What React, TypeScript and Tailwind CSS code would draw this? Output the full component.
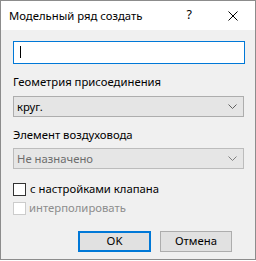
import type { ReactNode } from 'react'

const font = { fontFamily: '"Noto Sans", "Open Sans", sans-serif' }

const Chevron = ({ color = '#606060' }: { color?: string }) => (
  <svg width="9" height="5" viewBox="0 0 9 5" className="block">
    <polyline points="0.5,0.5 4.5,4.5 8.5,0.5" fill="none" stroke={color} strokeWidth="1" />
  </svg>
)

interface ComboProps {
  value: string
  disabled?: boolean
}

const Combo = ({ value, disabled }: ComboProps) => (
  <div
    className={
      disabled
        ? 'flex h-[21px] w-[231px] items-center justify-between border border-[#bcbcbc] bg-[#e6e6e6] pl-[3px] pr-[6px] text-[11.3px] text-[#6d6d6d]'
        : 'flex h-[21px] w-[231px] items-center justify-between border border-[#adadad] bg-[#e5e5e5] pl-[3px] pr-[6px] text-[11.3px] text-black'
    }
  >
    <span className="leading-none">{value}</span>
    <Chevron color={disabled ? '#808080' : '#606060'} />
  </div>
)

interface CheckProps {
  children: ReactNode
  disabled?: boolean
}

const Check = ({ children, disabled }: CheckProps) => (
  <div className="flex h-[16px] items-center">
    <div
      className={
        disabled
          ? 'h-[13px] w-[13px] border border-[#cccccc] bg-white'
          : 'h-[13px] w-[13px] border border-[#333333] bg-white'
      }
    />
    <span
      className={
        disabled
          ? 'ml-[3px] text-[11.3px] leading-none text-[#8d8d8d]'
          : 'ml-[4px] text-[11.3px] leading-none text-black'
      }
    >
      {children}
    </span>
  </div>
)

export default function App() {
  return (
    <div className="h-[261px] w-[256px] bg-white" style={font}>
      <div className="flex h-[260px] w-[256px] flex-col border border-[#8c8c8c] bg-[#f0f0f0]">
        {/* title bar */}
        <div className="flex h-[29px] shrink-0 items-center bg-white pl-[8px]">
          <span className="text-[11.3px] leading-none text-black">Модельный ряд создать</span>
          <span className="ml-auto mr-[36px] text-[12.5px] leading-none text-black">?</span>
          <svg width="10" height="10" viewBox="0 0 10 10" className="mr-[17px]">
            <line x1="0.5" y1="0.5" x2="9.5" y2="9.5" stroke="#000" strokeWidth="1" />
            <line x1="9.5" y1="0.5" x2="0.5" y2="9.5" stroke="#000" strokeWidth="1" />
          </svg>
        </div>

        <div className="flex flex-col px-[12px]">
          <div className="relative mt-[11px] h-[23px] w-[232px] border border-[#0078d7] bg-white">
            <div className="absolute left-[6px] top-[4px] h-[12px] w-px bg-black" />
          </div>

          <div className="mt-[10px] h-[16px] text-[11.3px] leading-[16px] text-black">Геометрия присоединения</div>
          <div className="mt-[6px]">
            <Combo value="круг." />
          </div>

          <div className="mt-[10px] h-[16px] text-[11.3px] leading-[16px] text-black">Элемент воздуховода</div>
          <div className="mt-[5px]">
            <Combo value="Не назначено" disabled />
          </div>

          <div className="mt-[12px]">
            <Check>с настройками клапана</Check>
          </div>
          <div className="mt-[3px]">
            <Check disabled>интерполировать</Check>
          </div>

          <div className="mt-[15px] flex justify-end gap-[9px] pr-[11px]">
            <div className="flex h-[21px] w-[73px] items-center justify-center border-2 border-[#0078d7] bg-[#e1e1e1] text-[11.3px] text-black">
              OK
            </div>
            <div className="flex h-[21px] w-[72px] items-center justify-center border border-[#adadad] bg-[#e1e1e1] text-[11.3px] text-black">
              Отмена
            </div>
          </div>
        </div>
      </div>
    </div>
  )
}
